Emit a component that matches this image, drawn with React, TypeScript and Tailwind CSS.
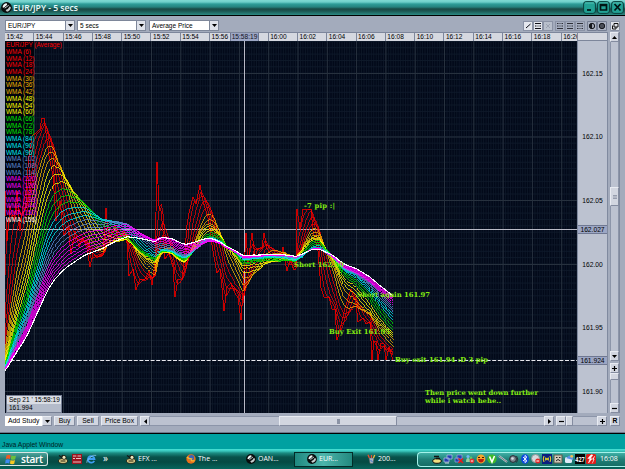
import type { ReactNode } from 'react';
import clsx from 'clsx';

// the 15:58 slot sits under the cursor label
const TIMES = [
  '15:42', '15:44', '15:46', '15:48', '15:50', '15:52', '15:54', '15:56', '', '16:00',
  '16:02', '16:04', '16:06', '16:08', '16:10', '16:12', '16:14', '16:16', '16:18', '16:20',
];

const RED = '#ff0000';
const GOLD = '#f0b400';
const YELLOW = '#ffff00';
const GREEN = '#00e400';
const CYAN = '#00eaf0';
const BLUE = '#5f8cd8';
const MAGENTA = '#ff00ff';
const WHITE = '#ffffff';

// one entry per study, period = (index + 1) * 6
const STUDY_COLORS = [
  RED, RED, RED, RED, GOLD, GOLD, GOLD, YELLOW, YELLOW, YELLOW, GREEN, GREEN, GREEN,
  CYAN, CYAN, CYAN, BLUE, BLUE, BLUE, MAGENTA, MAGENTA, MAGENTA, MAGENTA, MAGENTA, MAGENTA, WHITE,
];
const STUDIES = STUDY_COLORS.map((color, i) => ({ period: (i + 1) * 6, color }));

// average price, in chart pixels
const PRICE: [number, number][] = [
  [-200, 335], [-3, 335], [-2, 210], [0, 150], [2, 200], [5, 165], [9, 180], [12, 150], [15, 190], [18, 165],
  [21, 150], [24, 115], [27, 95], [31, 92], [35, 88], [37, 77], [39, 77], [41, 92], [44, 115], [48, 135], [51, 180],
  [55, 160], [59, 195], [63, 185], [66, 213], [70, 190], [74, 206], [78, 196], [82, 208], [85, 226], [88, 212],
  [92, 217], [98, 212], [101, 167], [103, 190], [106, 196], [110, 184], [114, 199], [119, 190], [122, 202],
  [124, 235], [128, 228], [131, 249], [135, 238], [140, 238], [144, 230], [147, 244], [150, 222], [152, 121],
  [154, 165], [156, 170], [158, 190], [160, 218], [164, 212], [168, 226], [170, 256], [173, 238], [177, 238],
  [180, 210], [182, 184], [184, 172], [188, 156], [191, 163], [195, 144], [198, 160], [203, 177], [208, 210],
  [212, 232], [215, 228], [217, 247], [219, 270], [222, 246], [226, 242], [230, 252], [233, 257], [236, 279],
  [238, 250], [241, 192], [243, 222], [247, 192], [250, 215], [253, 208], [257, 206], [259, 192], [262, 208],
  [270, 218], [276, 216], [278, 206], [280, 220], [282, 230], [285, 219], [289, 229], [291, 228], [292, 168],
  [295, 188], [298, 168], [306, 168], [308, 190], [313, 210], [316, 247], [319, 256], [324, 256], [327, 268],
  [330, 268], [332, 299], [335, 289], [340, 267], [346, 248], [351, 262], [353, 281], [358, 277], [361, 283],
  [365, 281], [367, 319], [369, 300], [371, 300], [373, 319], [376, 302], [379, 303], [381, 319], [384, 306],
  [388, 319],
];

const STEP = 1.22;

function priceAt(x: number) {
  for (let i = 1; i < PRICE.length; i++) {
    const [x1, y1] = PRICE[i];
    if (x <= x1) {
      const [x0, y0] = PRICE[i - 1];
      return y0 + ((x - x0) / (x1 - x0)) * (y1 - y0);
    }
  }
  return PRICE[PRICE.length - 1][1];
}

const bars: number[] = [];
for (let i = -160; i * STEP <= 388; i++) bars.push(priceAt(i * STEP));

function wmaPath(period: number) {
  const points: string[] = [];
  for (let i = 160; i < bars.length; i++) {
    let sum = 0;
    let weight = 0;
    for (let k = 0; k < period; k++) {
      const w = period - k;
      sum += bars[i - k] * w;
      weight += w;
    }
    points.push(`${((i - 160) * STEP).toFixed(1)},${(sum / weight).toFixed(1)}`);
  }
  return points.join(' ');
}

const pricePath = PRICE.filter(([x]) => x >= 0).map(([x, y]) => `${x},${y}`).join(' ');

function Chart() {
  const minorX = Array.from({ length: 235 }, (_, i) => i * 2.442);
  const minorY = Array.from({ length: 58 }, (_, i) => 0.4 + i * 6.36);
  const majorX = Array.from({ length: 19 }, (_, i) => 29.3 * (i + 1));
  const majorY = [32, 95.5, 159, 223, 286.5, 350];
  return (
    <svg width="572" height="372" viewBox="0 0 572 372" className="block">
      <rect width="572" height="372" fill="#020919" />
      {minorX.map((x) => <path key={x} d={`M${x} 0V372`} stroke="#101b2b" strokeWidth="0.8" />)}
      {minorY.map((y) => <path key={y} d={`M0 ${y}H572`} stroke="#101b2b" strokeWidth="0.9" />)}
      {majorX.map((x) => <path key={x} d={`M${x} 0V372`} stroke="#27313e" strokeWidth="1" />)}
      {majorY.map((y) => <path key={y} d={`M0 ${y + 0.5}H572`} stroke="#27313e" strokeWidth="1" />)}
      <rect width="29" height="181" fill="#01040e" />
      <path d="M0 188.5H572M239.5 0V372" stroke="#b9bac6" strokeWidth="1" />
      <path d="M0 319.5H572" stroke="#e8e8ee" strokeWidth="1" strokeDasharray="4 1.6" />
      <g fill="none" shapeRendering="crispEdges">
        <polyline points={pricePath} stroke="#c80000" strokeWidth="1" />
        {STUDIES.map((s) => (
          <polyline
            key={s.period}
            points={wmaPath(s.period)}
            stroke={s.color}
            strokeWidth={s.period === 156 ? 1.1 : 0.8}
            opacity={s.period === 156 ? 1 : s.period < 30 ? 0.85 : 0.92}
          />
        ))}
      </g>
      <g fontFamily="Liberation Sans, sans-serif" fontSize="6.4">
        <text x="1" y="6" fill={RED} textLength="56">EUR/JPY (Average)</text>
        {STUDIES.map((s, i) => (
          <text
            key={s.period}
            x="1"
            y={12.8 + i * 6.72}
            fill={s.color}
            textLength={s.period < 10 ? 25 : s.period < 100 ? 28.5 : 31}
            lengthAdjust="spacingAndGlyphs"
          >
            WMA ({s.period})
          </text>
        ))}
      </g>
      <g fontFamily="DejaVu Serif, serif" fontWeight="700" fontSize="6.8" fill="#86ee12">
        <text x="299" y="167" textLength="31">-7 pip :|</text>
        <text x="289" y="226" textLength="50">Short 162.00</text>
        <text x="352" y="256" textLength="73">Short again 161.97</text>
        <text x="324" y="293" textLength="61">Buy Exit 161.95</text>
        <text x="390" y="320.5" textLength="93">Buy exit 161.94 :D 3 pip</text>
        <text x="420" y="353.5" textLength="113">Then price went down further</text>
        <text x="420" y="362" textLength="76">while i watch hehe..</text>
      </g>
    </svg>
  );
}

function Btn({ className, children }: { className?: string; children?: ReactNode }) {
  return (
    <div className={clsx('flex shrink-0 items-center justify-center border border-[#848ca0] border-t-[#e8ebf2] border-l-[#e8ebf2] bg-[#d2d6e0] text-black', className ?? 'h-[10px]')}>
      {children}
    </div>
  );
}

function Arrow({ dir }: { dir: 'up' | 'down' | 'left' | 'right' }) {
  const paths = { up: 'M0 4L2.5 1L5 4Z', down: 'M0 1H5L2.5 4Z', left: 'M4 0V5L1 2.5Z', right: 'M1 0V5L4 2.5Z' };
  return (
    <svg width="5" height="5" viewBox="0 0 5 5">
      <path d={paths[dir]} fill="#000" />
    </svg>
  );
}

function Sign({ plus }: { plus?: boolean }) {
  return (
    <svg width="5" height="5" viewBox="0 0 5 5">
      <path d={plus ? 'M0 2.5H5M2.5 0V5' : 'M0 2.5H5'} stroke="#000" strokeWidth="1.2" />
    </svg>
  );
}

function Dropdown({ label, className }: { label: string; className: string }) {
  return (
    <div className={clsx('flex h-[11px] shrink-0 border border-[#7e879a]', className)}>
      <div className="flex-1 overflow-hidden bg-white pl-[2px] text-[6.5px] leading-[10px] whitespace-nowrap text-black">{label}</div>
      <div className="flex w-[9px] items-center justify-center border-l border-[#7e879a] bg-[#dfe2ea]">
        <Arrow dir="down" />
      </div>
    </div>
  );
}

function Globe({ size = 10 }: { size?: number }) {
  return (
    <svg width={size} height={size} viewBox="0 0 10 10" className="shrink-0">
      <circle cx="5" cy="5" r="4.9" fill="#080c0c" />
      <path d="M1.4 4.8Q2 1.4 5.2 1.2L5.6 2.6Q4 4.2 2.6 5.2Z" fill="#f2f6f6" />
      <path d="M4.2 7.2Q6.8 6.4 8 3.8L9 5Q8.5 8.2 5.4 8.8Z" fill="#c6cece" />
      <path d="M3.4 5.6L7 3" stroke="#e8eeee" strokeWidth="0.8" />
    </svg>
  );
}

function TitleBar() {
  return (
    <div className="flex h-[16px] shrink-0 items-center border-b border-black bg-[linear-gradient(#7fd9d2_0px,#6fcfca_2px,#2e9c98_4px,#25817d_7px,#1a4743_9px,#1c5752_11px,#2c8a84_15px)] pl-[1px]">
      <Globe size={11} />
      <span className="ml-[1px] w-[300px] font-['Open_Sans',sans-serif] text-[8.6px] font-semibold leading-[14px] text-[#e9fbfb]">
        EUR/JPY - 5 secs
      </span>
      <div className="mr-[1px] ml-auto flex gap-[1px]">
        {['M4 9H8', 'M3.5 3.5H9.5V9H3.5ZM3.5 4.4H9.5', 'M3.5 3L9.5 9.5M9.5 3L3.5 9.5'].map((d) => (
          <svg key={d} width="13" height="13" viewBox="0 0 13 13">
            <rect x="0.6" y="0.6" width="11.8" height="11.8" rx="2.5" fill="#22a194" stroke="#0a3f3c" />
            <path d="M2 2H11" stroke="#5fc7bb" strokeWidth="0.8" />
            <path d={d} fill="none" stroke="#001414" strokeWidth="1.7" />
          </svg>
        ))}
      </div>
    </div>
  );
}

function ToolIcon({ d, dim, pressed }: { d: string; dim?: boolean; pressed?: boolean }) {
  return (
    <svg width="10" height="10" viewBox="0 0 10 10">
      <rect x="0.5" y="0.5" width="9" height="9" fill={dim ? '#b8bfcc' : pressed ? '#a6aec0' : '#e4e7ee'} stroke="#8a92a5" />
      <path d={d} fill="none" stroke={dim ? '#9aa1b0' : '#101018'} strokeWidth={pressed ? 0.8 : 1} />
    </svg>
  );
}

function Toolbar() {
  return (
    <div className="flex h-[16px] shrink-0 items-end pb-[1px] pl-[5px]">
      <Dropdown label="EUR/JPY" className="w-[70px]" />
      <Dropdown label="5 secs" className="ml-[2px] w-[69px]" />
      <Dropdown label="Average Price" className="ml-[3px] w-[70px]" />
      <div className="mr-[5px] ml-auto flex">
        <ToolIcon d="M3 7L7.5 3" />
        <ToolIcon d="M2 2.5H8M2 5H3.5M4.5 5H5.5M6.5 5H8M2 7.5H8" />
        <ToolIcon dim d="M3 3L7 7M3 7L7 3" />
        <div className="ml-[2px] flex">
          <ToolIcon pressed d="M2 2.5H3.5M4.5 2.5H5.5M6.5 2.5H8M2 5H3.5M4.5 5H5.5M6.5 5H8M2 7.5H8" />
          <ToolIcon pressed d="M2 2.5H8M2 5H3.5M4.5 5H5.5M6.5 5H8M2 7.5H8" />
          <ToolIcon pressed d="M2 2.5H8M2 5H3.5M4.5 5H5.5M6.5 5H8M2 7.5H3.5M4.5 7.5H5.5M6.5 7.5H8" />
        </div>
        <svg width="20" height="10" viewBox="0 0 20 10" className="ml-[2px]">
          <path d="M0.5 0.5H9.5V9.5H0.5ZM10.5 0.5H19.5V9.5H10.5Z" fill="#aab1c1" stroke="#747d92" />
          <circle cx="5" cy="5" r="2.7" fill="#9aa0ad" stroke="#15171d" />
          <path d="M5 2.3A2.7 2.7 0 0 0 5 7.7Z" fill="#15171d" />
          <circle cx="15" cy="5" r="2.7" fill="#4a4e58" stroke="#15171d" />
        </svg>
        <svg width="10" height="10" viewBox="0 0 10 10" className="ml-[3px]">
          <path d="M0.5 0.5H9.5V9.5H0.5Z" fill="#dfe2ea" stroke="#8a92a5" />
          <path d="M4 2.5H8V6H4ZM2.5 4.5V8H6V6" fill="none" stroke="#111" />
        </svg>
      </div>
    </div>
  );
}

function TimeAxis() {
  return (
    <div className="relative flex h-[9px] w-[572px] overflow-hidden border-t border-[#7d869b] bg-[#d5d8e0]">
      {TIMES.map((t, i) => (
        <div key={i} className="w-[29.3px] shrink-0 border-r border-[#7d869b] pl-[1.5px] text-[6.6px] leading-[8px] text-black">
          {t}
        </div>
      ))}
      <div className="absolute top-0 left-[225px] h-[8px] w-[29px] border-x border-[#6d7691] bg-[#9ca6c4] text-center text-[6.6px] leading-[8px] text-[#10121c]">
        15:58:19
      </div>
    </div>
  );
}

function Price({ children, marked }: { children: ReactNode; marked?: boolean }) {
  return (
    <div className={clsx('h-[9px] w-full text-center text-[6.7px] text-black', marked ? 'border-y border-[#6f7892] bg-[#9ca6c4] leading-[7px]' : 'leading-[9px]')}>
      {children}
    </div>
  );
}

function PriceAxis() {
  return (
    <div className="flex w-[31px] shrink-0 flex-col border-r border-l border-[#808a9f] bg-[#bcc2d0]">
      <div className="h-[9px] shrink-0 border-y border-[#7d869b] bg-[#d5d8e0]" />
      <div className="mt-[28px]"><Price>162.15</Price></div>
      <div className="mt-[54px]"><Price>162.10</Price></div>
      <div className="mt-[55px]"><Price>162.05</Price></div>
      <div className="mt-[20px]"><Price marked>162.027</Price></div>
      <div className="mt-[26px]"><Price>162.00</Price></div>
      <div className="mt-[54px]"><Price>161.95</Price></div>
      <div className="mt-[24px]"><Price marked>161.924</Price></div>
      <div className="mt-[22px]"><Price>161.90</Price></div>
    </div>
  );
}

function SideScroll() {
  return (
    <div className="ml-[2px] flex w-[10px] shrink-0 flex-col border-r border-[#7f889c]">
      <Btn><Arrow dir="up" /></Btn>
      <div className="h-[145px] border-x border-[#8c95a9] bg-[#bcc2d0]" />
      <Btn className="h-[19px]">
        <svg width="4" height="4" viewBox="0 0 4 4"><path d="M0 0.5H4M0 2H4M0 3.5H4" stroke="#858da0" strokeWidth="0.8" /></svg>
      </Btn>
      <div className="h-[145px] border-x border-[#8c95a9] bg-[#bcc2d0]" />
      <Btn><Arrow dir="down" /></Btn>
      <Btn className="mt-[2px] h-[10px]"><Sign plus /></Btn>
      <Btn className="h-[7px]" />
      <div className="flex-1 border-x border-[#8c95a9] bg-[#bcc2d0]" />
      <Btn><Sign /></Btn>
    </div>
  );
}

function BottomBar() {
  return (
    <div className="flex h-[20px] shrink-0 items-start border-b border-[#6f788c] pt-[3px] pl-[5px] text-[6.8px] leading-[8px] text-black">
      <div className="flex h-[10px] w-[37px] items-center bg-white pl-[3px] whitespace-nowrap">Add Study</div>
      <Btn className="h-[10px] w-[10px]"><Arrow dir="down" /></Btn>
      <Btn className="ml-[2px] h-[10px] w-[21px]">Buy</Btn>
      <Btn className="ml-[2px] h-[10px] w-[22px]">Sell</Btn>
      <Btn className="ml-[2px] h-[10px] w-[37px] whitespace-nowrap">Price Box</Btn>
      <Btn className="ml-[2px] h-[10px] w-[10px]"><Arrow dir="left" /></Btn>
      <div className="h-[10px] w-[129px] border-y border-[#8c95a9] bg-[#bcc2d0]" />
      <Btn className="h-[10px] w-[118px]">
        <div className="h-[5px] w-[3px] bg-[#8b93a5]" />
      </Btn>
      <div className="h-[10px] w-[147px] border-y border-[#8c95a9] bg-[#bcc2d0]" />
      <Btn className="h-[10px] w-[10px]"><Arrow dir="right" /></Btn>
      <Btn className="ml-[2px] h-[10px] w-[10px]"><Sign /></Btn>
      <Btn className="h-[10px] w-[7px]" />
      <div className="h-[10px] w-[24px] border-y border-[#8c95a9] bg-[#bcc2d0]" />
      <Btn className="h-[10px] w-[10px]"><Sign plus /></Btn>
      <Btn className="ml-[3px] h-[10px] w-[10px] font-bold">R</Btn>
    </div>
  );
}

function Wasp() {
  return (
    <svg width="10" height="10" viewBox="0 0 10 10" className="shrink-0">
      <ellipse cx="5" cy="7" rx="4.5" ry="2.4" fill="#e8d890" stroke="#1a1408" strokeWidth="0.8" />
      <path d="M1 1.5L4 3.5M4 1L5 3" stroke="#141414" strokeWidth="1.2" />
      <circle cx="6" cy="3.4" r="2" fill="#f1e9c0" stroke="#1a1408" strokeWidth="0.8" />
      <path d="M2.5 7H7.5" stroke="#1a1408" strokeWidth="1" />
    </svg>
  );
}

function Firefox() {
  return (
    <svg width="10" height="10" viewBox="0 0 10 10" className="shrink-0">
      <circle cx="5" cy="5" r="4.7" fill="#e8701a" />
      <circle cx="5.4" cy="3.8" r="2.7" fill="#3a62b8" />
      <path d="M0.8 3Q3 5 5.5 5Q4 7.4 8.6 6.6" stroke="#f6b632" strokeWidth="1.3" fill="none" />
    </svg>
  );
}

function Task({ icon, label, className }: { icon: ReactNode; label: string; className: string }) {
  return (
    <div className={clsx('flex h-[15px] shrink-0 items-center gap-[2px] whitespace-nowrap', className)}>
      {icon}
      <span>{label}</span>
    </div>
  );
}

const trayIcons: ReactNode[] = [
  <g key="wasp"><ellipse cx="5" cy="7" rx="4.3" ry="2.3" fill="#f0e080" stroke="#111" /><path d="M2 2.5H7M4 4.5H8" stroke="#111" strokeWidth="1.4" /></g>,
  <g key="net"><path d="M4 1H9V5H4ZM1 4H6V8H1Z" fill="#2340b0" stroke="#b8c4e8" strokeWidth="0.7" /><path d="M2 9H6" stroke="#c8d0e0" /></g>,
  <g key="net-off"><path d="M3 1H8V5H3ZM1 4H5V8H1Z" fill="#2340b0" stroke="#9caad8" strokeWidth="0.7" /><path d="M4.5 4.5L9 9M9 4.5L4.5 9" stroke="#e81818" strokeWidth="1.5" /></g>,
  <g key="users"><circle cx="3" cy="2.5" r="1.6" fill="#70b8f0" /><path d="M1 8Q1 4 3 4T5 8" fill="#90d0a0" /><circle cx="6" cy="4" r="1.4" fill="#58c868" /><circle cx="7" cy="7" r="2.4" fill="#e03030" /><path d="M5.8 7H8.2" stroke="#fff" /></g>,
  <g key="smile"><circle cx="5" cy="5" r="4.4" fill="#f3a62c" /><path d="M2 5H8Q7.5 8.5 5 8.5T2 5" fill="#b81c10" /><path d="M2 3.5H4M6 3.5H8" stroke="#402000" /></g>,
  <g key="v"><circle cx="5" cy="5" r="4.6" fill="#3dba28" /><path d="M2.5 2.5L5 8L7.5 2" stroke="#fff" strokeWidth="1.6" fill="none" /></g>,
  <g key="tool"><path d="M1 2L9 8" stroke="#cfd6dc" strokeWidth="2" /><path d="M1 2L9 8" stroke="#454b55" strokeWidth="0.7" /></g>,
  <g key="speaker"><circle cx="4" cy="5" r="3.4" fill="#7d858f" stroke="#252a33" /><circle cx="3.5" cy="4.5" r="1.3" fill="#d8dce2" /><path d="M7.5 2Q10 5 7.5 8.5" stroke="#2a2f38" fill="none" /></g>,
  <g key="bt"><ellipse cx="5" cy="5" rx="3.9" ry="4.8" fill="#0c48e0" /><path d="M3 3L7 6.8L5 8.6V1.4L7 3.2L3 7" stroke="#fff" strokeWidth="0.9" fill="none" /></g>,
  <g key="block"><circle cx="4.5" cy="4.5" r="4" fill="#d6d9dc" stroke="#8e9498" /><circle cx="6.8" cy="7" r="2.5" fill="#e02828" /><path d="M5.4 7H8.2" stroke="#fff" /></g>,
  <g key="wave"><rect width="10" height="10" fill="#0b2080" /><path d="M2 2Q0.5 5 2 8M8 2Q9.5 5 8 8M3.7 3.5V6.5M6.3 3.5V6.5" stroke="#f0e020" fill="none" /><circle cx="5" cy="5" r="1" fill="#f0e020" /></g>,
  <g key="face"><rect x="1" y="1" width="8" height="8" fill="#cfc9b8" stroke="#5a564a" /><path d="M3 3.5H4.5M6 3.5H7.5M3 7L5 5.5L7.5 7" stroke="#222" fill="none" /></g>,
  <g key="chat"><rect x="1" y="3" width="7" height="6" rx="1.5" fill="#dfeaf8" /><path d="M2 4Q6 0 9 2V6Z" fill="#5c90e8" /><circle cx="7.7" cy="2.3" r="1.4" fill="#f0c050" /></g>,
  <g key="num"><rect width="10" height="10" fill="#050505" /><text x="0.3" y="7.7" fontSize="6.6" fontWeight="700" fill="#f2f2f2" textLength="9.4" lengthAdjust="spacingAndGlyphs">427</text></g>,
  <g key="flash"><rect width="10" height="10" rx="1.5" fill="#e01c18" /><path d="M5 0.8L1.8 4.5H4L2.5 9L6 4.8H4.2L6.8 1ZM8.8 2L6.5 5.2H8.2L6.2 9.4" fill="#fff" stroke="#fff" strokeWidth="0.5" /></g>,
];

function Taskbar() {
  return (
    <div className="flex h-[20px] shrink-0 items-center bg-[linear-gradient(#46e2d6_0px,#3ac7bd_2px,#1b8c82_4px,#08524b_8px,#054a43_13px,#07655c_20px)] font-['Open_Sans',sans-serif] text-[7px] text-white">
      <div className="flex h-[14px] w-[48px] shrink-0 items-center gap-[4px] rounded-r-[3px] border border-l-0 border-[#d9e6e4] bg-[linear-gradient(#4ba39b,#2a7c74_45%,#176259)] pl-[5px]">
        <svg width="12" height="11" viewBox="0 0 12 11" className="shrink-0">
          <path d="M1.5 1.5Q3.5 0.2 5.7 1.3L5 5Q3 4 0.8 5Z" fill="#ee5a24" />
          <path d="M6.4 1.6Q8.6 2.6 11 1.5L10.2 5.2Q8 6.2 5.8 5.2Z" fill="#6cc03a" />
          <path d="M0.7 5.7Q2.8 4.8 4.9 5.8L4.2 9.4Q2.2 8.6 0.1 9.4Z" fill="#3f8af0" />
          <path d="M5.6 6Q7.8 7 10 6L9.2 9.7Q7 10.6 4.9 9.6Z" fill="#f6c820" />
        </svg>
        <span className="text-[10.2px] leading-[12px] font-semibold tracking-[-0.3px]">start</span>
      </div>
      <div className="ml-[10px] flex w-[68px] shrink-0 items-center gap-[4px]">
        <Wasp />
        <svg width="10" height="10" viewBox="0 0 10 10">
          <rect width="10" height="10" fill="#9c1520" />
          <path d="M1 2H4.3M5.5 2H9M1 4.5H3M4 4.5H9M1 8H9" stroke="#f2d6d6" strokeWidth="0.9" />
        </svg>
        <svg width="11" height="10" viewBox="0 0 11 10">
          <path d="M8.2 6.8A3.3 3.3 0 1 1 8.5 5H2.5" fill="none" stroke="#3d9df0" strokeWidth="1.8" />
          <path d="M0.8 8.8Q0 6.8 4 3.5T10.2 1.4" fill="none" stroke="#9ed4fa" strokeWidth="0.7" />
        </svg>
        <span className="ml-[2px] pb-[3px] text-[10px] leading-[10px]">»</span>
      </div>
      <Task icon={<Wasp />} label="EFX ..." className="w-[60px]" />
      <Task icon={<Firefox />} label="The ..." className="w-[60px]" />
      <Task icon={<Globe />} label="OAN..." className="w-[48px]" />
      <Task
        icon={<Globe />}
        label="EUR..."
        className="w-[59px] border border-[#022c28] bg-[linear-gradient(90deg,#1f8980,#4cb5ab_50%,#23897f)] pl-[12px]"
      />
      <Task
        icon={
          <svg width="9" height="10" viewBox="0 0 9 10">
            <path d="M2 4H7L6 9.5H3Z" fill="#a8b4bc" stroke="#4c5a60" strokeWidth="0.5" />
            <path d="M2.4 4L1 0.8M4.5 4V1" stroke="#e85030" strokeWidth="1.3" />
            <path d="M6.4 4L7.7 1" stroke="#f0c040" strokeWidth="1.3" />
            <path d="M3.5 6L5.5 8" stroke="#3b70d8" />
          </svg>
        }
        label="200..."
        className="ml-[14px] w-[49px]"
      />
      <div className="ml-auto flex h-[15px] w-[208px] items-center rounded-l-[4px] border border-r-0 border-[#a4f2ea] bg-[linear-gradient(#3fb0a6,#1f7f77_50%,#166d65)] pl-[14px]">
        <div className="flex gap-[1px]">
          {trayIcons.map((icon, i) => (
            <svg key={i} width="10" height="10" viewBox="0 0 10 10" fill="none">{icon}</svg>
          ))}
        </div>
        <span className="ml-[4px] text-[7px]">16:08</span>
      </div>
    </div>
  );
}

export default function App() {
  return (
    <div className="flex h-[469px] w-[625px] flex-col overflow-hidden bg-[#a3abbc] font-['Liberation_Sans',Arial,sans-serif]">
      <TitleBar />
      <Toolbar />
      <div className="flex h-[381px] shrink-0 pl-[5px]">
        <div className="relative w-[572px] shrink-0">
          <TimeAxis />
          <Chart />
          <div className="absolute bottom-0 left-[1px] w-[56px] border border-[#767f94] bg-[#dadde4] text-[6.5px] leading-[8px] text-black">
            <div className="pl-[2px] whitespace-nowrap">Sep 21 &#39; 15:58:19</div>
            <div className="bg-[#b4bbca] pl-[2px]">161.994</div>
          </div>
        </div>
        <PriceAxis />
        <SideScroll />
      </div>
      <BottomBar />
      <div className="h-[16px] shrink-0 border-t border-black bg-[#00a1a1] pt-[5px] pl-[2px] text-[6.8px] leading-[11px] text-[#022]">
        Java Applet Window
      </div>
      <Taskbar />
    </div>
  );
}
